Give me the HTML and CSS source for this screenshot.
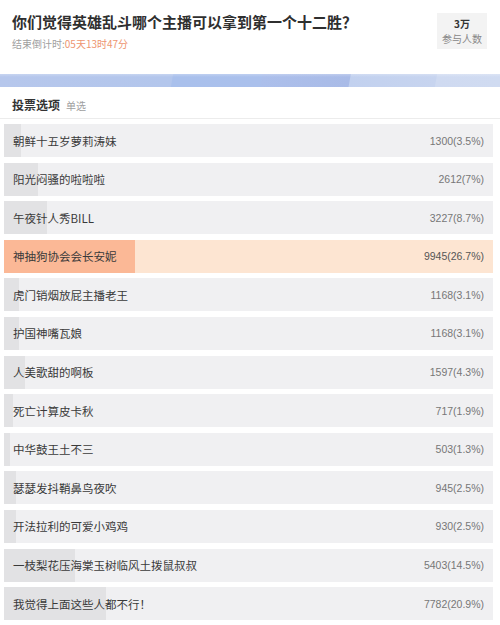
FILE: index.html
```html
<!DOCTYPE html>
<html lang="zh-CN">
<head>
<meta charset="utf-8">
<link rel="stylesheet" href="styles.css">
</head>
<body>
<div class="page">
  <header class="top">
    <div class="top-text">
      <h1 class="title">你们觉得英雄乱斗哪个主播可以拿到第一个十二胜？</h1>
      <div class="countdown">结束倒计时:<span class="cd-num">05天13时47分</span></div>
    </div>
    <div class="stats">
      <div class="stats-num">3万</div>
      <div class="stats-label">参与人数</div>
    </div>
  </header>
  <div class="band"></div>
  <div class="section-head"><span class="sh-title">投票选项</span><span class="sh-sub">单选</span></div>
  <div class="options">
    <div class="opt"><div class="fill" style="width:3.5%"></div><span class="label">朝鲜十五岁萝莉涛妹</span><span class="count">1300(3.5%)</span></div>
    <div class="opt"><div class="fill" style="width:7%"></div><span class="label">阳光闷骚的啦啦啦</span><span class="count">2612(7%)</span></div>
    <div class="opt"><div class="fill" style="width:8.7%"></div><span class="label">午夜针人秀BILL</span><span class="count">3227(8.7%)</span></div>
    <div class="opt opt-top"><div class="fill" style="width:26.7%"></div><span class="label">神抽狗协会会长安妮</span><span class="count">9945(26.7%)</span></div>
    <div class="opt"><div class="fill" style="width:3.1%"></div><span class="label">虎门销烟放屁主播老王</span><span class="count">1168(3.1%)</span></div>
    <div class="opt"><div class="fill" style="width:3.1%"></div><span class="label">护国神嘴瓦娘</span><span class="count">1168(3.1%)</span></div>
    <div class="opt"><div class="fill" style="width:4.3%"></div><span class="label">人美歌甜的啊板</span><span class="count">1597(4.3%)</span></div>
    <div class="opt"><div class="fill" style="width:1.9%"></div><span class="label">死亡计算皮卡秋</span><span class="count">717(1.9%)</span></div>
    <div class="opt"><div class="fill" style="width:1.3%"></div><span class="label">中华鼓王土不三</span><span class="count">503(1.3%)</span></div>
    <div class="opt"><div class="fill" style="width:2.5%"></div><span class="label">瑟瑟发抖鞘鼻鸟夜吹</span><span class="count">945(2.5%)</span></div>
    <div class="opt"><div class="fill" style="width:2.5%"></div><span class="label">开法拉利的可爱小鸡鸡</span><span class="count">930(2.5%)</span></div>
    <div class="opt"><div class="fill" style="width:14.5%"></div><span class="label">一枝梨花压海棠玉树临风土拨鼠叔叔</span><span class="count">5403(14.5%)</span></div>
    <div class="opt"><div class="fill" style="width:20.9%"></div><span class="label">我觉得上面这些人都不行！</span><span class="count">7782(20.9%)</span></div>
  </div>
</div>
</body>
</html>
```
FILE: styles.css
```css
* { box-sizing: border-box; }
html, body { margin: 0; padding: 0; background: #fff; }
body {
  font-family: "Liberation Sans", Arial, "Noto Sans CJK SC", sans-serif;
  color: #333;
  width: 500px;
  height: 625px;
  overflow: hidden;
}
.page { display: flex; flex-direction: column; }
.top {
  display: flex;
  justify-content: space-between;
  align-items: flex-start;
  padding: 13px 13px 0 12px;
  height: 74px;
}
.top-text { display: flex; flex-direction: column; }
.title {
  margin: 0;
  font-size: 15px;
  line-height: 18px;
  font-weight: bold;
  color: #2f2f2f;
  font-family: "Noto Sans CJK SC", sans-serif;
}
.countdown {
  margin-top: 7px;
  font-size: 10px;
  line-height: 12px;
  color: #a0a0a0;
  font-family: "Noto Sans CJK SC", sans-serif;
}
.cd-num { color: #ee9570; }
.stats {
  width: 50px;
  height: 36px;
  background: #f3f3f3;
  display: flex;
  flex-direction: column;
  align-items: center;
  justify-content: center;
  gap: 1px;
  font-family: "Noto Sans CJK SC", sans-serif;
}
.stats-num { font-size: 10px; line-height: 14px; font-weight: bold; color: #333; }
.stats-label { font-size: 10px; line-height: 14px; color: #888; }
.band {
  height: 13px;
  background:
    linear-gradient(180deg, rgba(255,255,255,0.25) 0, rgba(255,255,255,0) 3px),
    linear-gradient(100deg,
      #b6c7ec 0, #b3c6ec 170px,
      #a9c0ec 171px, #aac0ec 258px,
      #acbfeb 259px, #a9bbe7 345px,
      #c2d1ef 346px, #c7d4ef 430px,
      #cfdaf1 431px, #d0dbf1 100%);
}
.section-head {
  display: flex;
  align-items: baseline;
  gap: 6px;
  padding: 9px 12px 0 12px;
  height: 32px;
  border-bottom: 1px solid #ececec;
  font-family: "Noto Sans CJK SC", sans-serif;
}
.sh-title { font-size: 12px; font-weight: bold; color: #333; }
.sh-sub { font-size: 10px; color: #a0a0a0; }
.options {
  display: flex;
  flex-direction: column;
  gap: 5.6px;
  padding: 5px 7px 0 4px;
}
.opt {
  position: relative;
  height: 33px;
  background: #f0f0f2;
  display: flex;
  align-items: center;
  justify-content: space-between;
  padding: 0 9px 0 9px;
}
.fill {
  position: absolute;
  left: 0; top: 0; bottom: 0;
  background: #e2e2e4;
}
.opt-top { background: #fde5d2; }
.opt-top .fill { background: #fbb896; }
.label {
  position: relative;
  font-size: 11.5px;
  color: #3a3a3a;
  font-family: "Noto Sans CJK SC", sans-serif;
}
.count {
  position: relative;
  font-size: 10.5px;
  color: #777;
  font-family: "Liberation Sans", Arial, sans-serif;
}
.opt-top .count { color: #555; }
```
